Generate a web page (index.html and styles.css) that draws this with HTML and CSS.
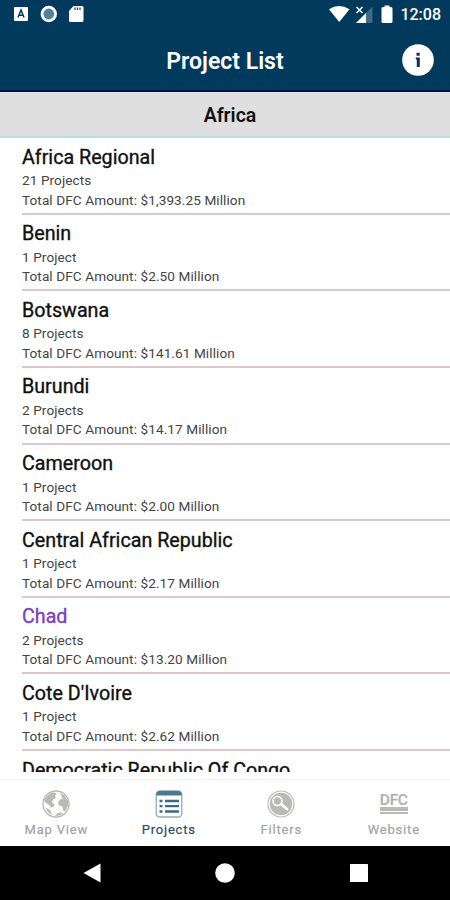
FILE: index.html
```
<!DOCTYPE html>
<html lang="en">
<head>
    <meta charset="utf-8">
    <title>Project List</title>
    <link rel="stylesheet" href="styles.css">
</head>
<body>
    <div class="status">
        <svg class="status-left" width="72" height="18" viewBox="0 0 72 18">
            <rect width="14" height="14" x="0" y="2" rx="1" fill="#fff"/>
            <path d="M4 12.5 7 5l3 7.500M5.200 10.200h3.600" fill="none" stroke="#023a5e" stroke-width="1.500"/>
            <circle cx="34.800" cy="9" r="6.800" fill="#55809a" stroke="#fff" stroke-width="2.800"/>
            <path d="M59.500 1H68q1.500 0 1.500 1.500v13q0 1.500-1.500 1.500H56.500q-1.500 0-1.500-1.500V6z" fill="#fff"/>
            <path d="M61 2.500v2.500M63.500 2.500v2.500M66 2.500v2.500" stroke="#023a5e" stroke-width="1.200"/>
        </svg>
        <div class="status-right">
            <svg width="66" height="20" viewBox="0 0 66 20">
                <path d="M1 4.200Q11 -2 21.500 4.200L11.200 17z" fill="#fff"/>
                <path d="M44.500 1.500V18H28z" fill="#3f6b86"/>
                <path d="M38 8v10H28z" fill="#fff"/>
                <path d="m28.500 2 6 6m0-6-6 6" stroke="#fff" stroke-width="1.500"/>
                <path d="M56.500 2v-1.500h5v1.500h1.500q1.500 0 1.500 1.500V16.500q0 1.500-1.500 1.500h-8q-1.500 0-1.500-1.500V3.500Q53.500 2 55 2z" fill="#fff"/>
            </svg>
            <span class="clock">12:08</span>
        </div>
    </div>

    <div class="header">
        <h1>Project List</h1>
        <svg class="info" width="32" height="32" viewBox="0 0 32 32">
            <circle cx="16" cy="16" r="15.800" fill="#fff"/>
            <path d="M14.500 8.700h3.200v3h-3.200zM13.800 13.500h4v9.500h-3v-7.500h-1z" fill="#12324b"/>
        </svg>
    </div>

    <div class="section">Africa</div>

    <div class="list">
        <div class="row">
            <h2>Africa Regional</h2>
            <p>21 Projects</p>
            <p>Total DFC Amount: $1,393.25 Million</p>
        </div>
        <div class="row">
            <h2>Benin</h2>
            <p>1 Project</p>
            <p>Total DFC Amount: $2.50 Million</p>
        </div>
        <div class="row">
            <h2>Botswana</h2>
            <p>8 Projects</p>
            <p>Total DFC Amount: $141.61 Million</p>
        </div>
        <div class="row">
            <h2>Burundi</h2>
            <p>2 Projects</p>
            <p>Total DFC Amount: $14.17 Million</p>
        </div>
        <div class="row">
            <h2>Cameroon</h2>
            <p>1 Project</p>
            <p>Total DFC Amount: $2.00 Million</p>
        </div>
        <div class="row">
            <h2>Central African Republic</h2>
            <p>1 Project</p>
            <p>Total DFC Amount: $2.17 Million</p>
        </div>
        <div class="row">
            <h2 class="selected">Chad</h2>
            <p>2 Projects</p>
            <p>Total DFC Amount: $13.20 Million</p>
        </div>
        <div class="row">
            <h2>Cote D'Ivoire</h2>
            <p>1 Project</p>
            <p>Total DFC Amount: $2.62 Million</p>
        </div>
        <div class="row">
            <h2>Democratic Republic Of Congo</h2>
        </div>
    </div>

    <div class="tabs">
        <div class="tab">
            <svg width="28" height="28" viewBox="0 0 28 28">
                <circle cx="14" cy="14" r="13" fill="#fff" stroke="#b9b9b6" stroke-width="1.300"/>
                <path d="M5 6 9 3l3.500-.5 2 1.500-1.500 2 1 2-3 1.500-1 3 2.500 2-.5 2-2.500 1-3-3-3.500-2-1-2.500z" fill="#b9b9b6"/>
                <path d="m18 3 4.500 2.500L26 11v5l-3 5.500-2-1-.5-4-3.500-1-1-3 2-3 3-.5-1.500-2.500z" fill="#b9b9b6"/>
                <path d="M3.500 17.500 8 20l2 5q-4.500-2-6.500-7.500zM13 26l2.500-3 4-.5 1.500 1q-3.500 2.500-8 2.500z" fill="#b9b9b6"/>
            </svg>
            <span>Map View</span>
        </div>
        <div class="tab active">
            <svg width="28" height="28" viewBox="0 0 28 28">
                <rect x="1.200" y="1" width="25.600" height="26" rx="3.500" fill="#fff" stroke="#8fadb9" stroke-width="1.300"/>
                <path d="M1.500 5.500V3.500Q2 1 4.500 1h19Q26 1 26.500 3.500V5.500z" fill="#4b7890"/>
                <path d="M4.500 11h3M4.500 16.200h3M4.500 21.500h3" stroke="#3c6b89" stroke-width="2.300"/>
                <path d="M10 11h14M10 16.200h14M10 21.500h14" stroke="#3c6b89" stroke-width="2.300"/>
            </svg>
            <span>Projects</span>
        </div>
        <div class="tab">
            <svg width="28" height="28" viewBox="0 0 28 28">
                <circle cx="14" cy="14" r="13" fill="#fff" stroke="#b9b9b6" stroke-width="1.200"/>
                <circle cx="14" cy="14" r="11.200" fill="#b9b9b6"/>
                <circle cx="10.500" cy="11" r="4.500" fill="#b9b9b6" stroke="#fff" stroke-width="1.600"/>
                <path d="m14.500 14.500 5.500 4.500" stroke="#fff" stroke-width="2.800" stroke-linecap="round"/>
            </svg>
            <span>Filters</span>
        </div>
        <div class="tab">
            <div class="dfc">DFC</div>
            <span>Website</span>
        </div>
    </div>

    <div class="navbar">
        <svg width="20" height="20" viewBox="0 0 20 20"><path d="M2.500 10 19.500 .5v19z" fill="#fff"/></svg>
        <svg width="20" height="20" viewBox="0 0 20 20"><circle cx="10" cy="10" r="9.800" fill="#fff"/></svg>
        <svg width="20" height="20" viewBox="0 0 20 20"><rect x="1" y="1" width="18" height="18" rx=".5" fill="#fff"/></svg>
    </div>
</body>
</html>
```
FILE: styles.css
```
body {
  margin: 0;
  width: 450px;
  height: 900px;
  display: flex;
  flex-direction: column;
  overflow: hidden;
  background: #fff;
  color: #111;
  font-family: Roboto, sans-serif;
}
svg {
  display: block;
}
h1, h2, p {
  margin: 0;
}

/* top */
.status {
  flex: none;
  box-sizing: border-box;
  height: 30px;
  padding: 5px 9px 0 14px;
  display: flex;
  justify-content: space-between;
  background: #023a5e;
}
.status-right {
  display: flex;
  gap: 6px;
}
.clock {
  color: #fff;
  font-size: 16px;
  font-weight: 500;
  line-height: 20px;
}
.header {
  flex: none;
  box-sizing: border-box;
  height: 62px;
  padding: 0 16px;
  display: grid;
  grid-template-columns: 32px 1fr 32px;
  align-items: center;
  background: #023a5e;
  border-bottom: 2px solid #04144a;
}
h1 {
  grid-column: 2;
  padding-top: 4px;
  color: #fff;
  font-size: 23px;
  font-weight: 600;
  line-height: 26px;
  text-align: center;
}
.section {
  flex: none;
  height: 44px;
  padding-left: 10px;
  line-height: 47px;
  background: #dfdfdf;
  border-bottom: 2px solid #b5dfe1;
  text-align: center;
  font-size: 19.5px;
  font-weight: 600;
}

/* project list */
.list {
  flex: none;
  height: 634px;
  overflow: hidden;
}
.row {
  box-sizing: border-box;
  height: 76.65px;
  margin-left: 22px;
  padding-top: 6.5px;
  border-bottom: 2px solid #dfc6cb;
}
h2 {
  font-size: 19.7px;
  font-weight: 400;
  line-height: 25px;
  -webkit-text-stroke: 0.35px;
}
h2.selected {
  color: #7b3fc4;
}
.row p {
  font-size: 13.6px;
  line-height: 19.5px;
  letter-spacing: 0.08px;
  color: #444;
}
.row h2 + p {
  margin-top: 1.5px;
}

/* bottom tabs */
.tabs {
  flex: 1;
  margin-top: 7px;
  border-top: 1px solid #f3f3f3;
  display: grid;
  grid-template-columns: repeat(4, 1fr);
}
.tab {
  padding-top: 10px;
  display: flex;
  flex-direction: column;
  align-items: center;
  color: #a3a3a3;
  font-size: 13px;
  line-height: 17px;
  letter-spacing: 0.8px;
  -webkit-text-stroke: 0.2px;
}
.tab span {
  margin-top: 3px;
}
.active {
  color: #2c4a6c;
}
.dfc {
  box-sizing: border-box;
  width: 28px;
  height: 28px;
  padding-top: 4px;
  color: #b0b0ae;
  font-size: 15.5px;
  font-weight: 500;
  line-height: 13px;
  letter-spacing: -0.3px;
  text-align: center;
  background: linear-gradient(#b9b9b6, #b9b9b6) 0 17px / 28px 4px no-repeat,
    linear-gradient(#b9b9b6, #b9b9b6) 0 22px / 28px 2px no-repeat;
}
.navbar {
  flex: none;
  height: 54px;
  padding: 0 81px;
  display: flex;
  justify-content: space-between;
  align-items: center;
  background: #000;
}
```
